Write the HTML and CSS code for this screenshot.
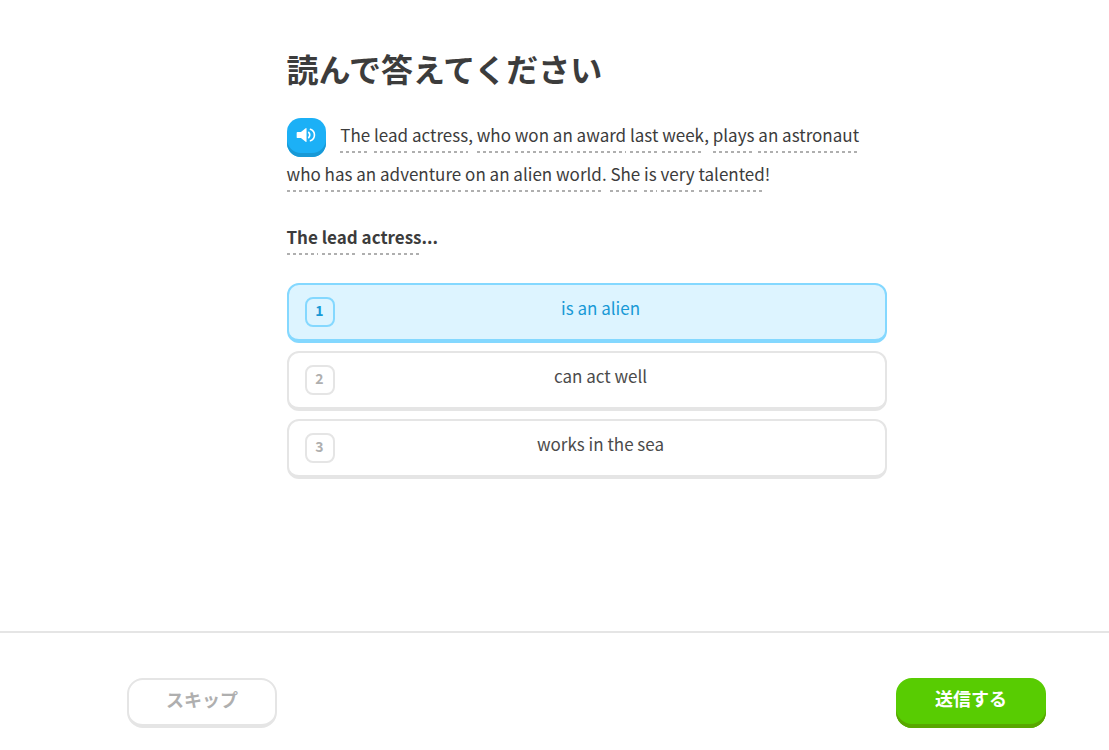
FILE: index.html
```html
<!DOCTYPE html>
<html lang="ja">
<head>
    <meta charset="UTF-8">
    <meta name="viewport" content="width=device-width, initial-scale=1.0">
    <title>読んで答えてください</title>
    <link rel="stylesheet" href="styles.css">
</head>
<body>
<form class="lesson">
    <main class="challenge">
        <h1 class="title">読んで答えてください</h1>

        <p class="passage" lang="en">
            <button type="button" class="speaker" aria-label="Play audio">
                <svg viewBox="0 0 22 18" width="20" height="16">
                    <path d="M1.5 5.5h3.8L10.6 1.3q1-.6 1 .5v14.4q0 1.1-1 .5L5.3 12.5H1.5q-1 0-1-1v-5q0-1 1-1z" fill="#fff"/>
                    <path d="M14 6q2.500 3 0 6M16 2.500q4.500 1.800 4.500 6.500t-4.500 6.500" fill="none" stroke="#fff" stroke-width="1.8" stroke-linecap="round"/>
                </svg>
            </button>
            <span class="word">The</span> <span class="word">lead</span> <span class="word">actress</span>, <span class="word">who</span> <span class="word">won</span> <span class="word">an</span> <span class="word">award</span> <span class="word">last</span> <span class="word">week</span>, <span class="word">plays</span> <span class="word">an</span> <span class="word">astronaut</span>
            <span class="word">who</span> <span class="word">has</span> <span class="word">an</span> <span class="word">adventure</span> <span class="word">on</span> <span class="word">an</span> <span class="word">alien</span> <span class="word">world</span>. <span class="word">She</span> <span class="word">is</span> <span class="word">very</span> <span class="word">talented</span>!
        </p>

        <p class="question" lang="en" id="question"><span class="word">The</span> <span class="word">lead</span> <span class="word">actress</span>...</p>

        <div class="choices" role="group" aria-labelledby="question" lang="en">
            <button type="button" class="choice selected" aria-pressed="true">
                <span class="number">1</span>
                <span class="text">is an alien</span>
            </button>
            <button type="button" class="choice" aria-pressed="false">
                <span class="number">2</span>
                <span class="text">can act well</span>
            </button>
            <button type="button" class="choice" aria-pressed="false">
                <span class="number">3</span>
                <span class="text">works in the sea</span>
            </button>
        </div>
    </main>

    <footer class="footer">
        <button type="button" class="btn skip">スキップ</button>
        <button type="submit" class="btn submit">送信する</button>
    </footer>
</form>

<script>
    const choices = document.querySelectorAll(".choice");

    choices.forEach((choice) => {
        choice.addEventListener("click", () => {
            choices.forEach((item) => {
                item.classList.toggle("selected", item === choice);
                item.setAttribute("aria-pressed", item === choice);
            });
        });
    });

    document.querySelector(".lesson").addEventListener("submit", (event) => {
        event.preventDefault();
    });
</script>
</body>
</html>
```
FILE: styles.css
```css
* {
    box-sizing: border-box;
}

body {
    margin: 0;
    background-color: #fff;
    color: #3c3c3c;
    font-family: "Noto Sans CJK JP", sans-serif;
    font-size: 17px;
}

button {
    font-family: inherit;
    cursor: pointer;
}

.lesson {
    display: flex;
    flex-direction: column;
    min-height: 100vh;
}

.challenge {
    flex: 1;
    display: flex;
    flex-direction: column;
    width: 100%;
    padding: 44px 63px 32px 127px;
}

.challenge > * {
    width: 100%;
    max-width: 600px;
    margin: 0 auto;
}

.title {
    font-size: 32px;
    line-height: 48px;
    font-weight: 700;
}

.challenge .passage {
    margin-top: 23px;
    line-height: 39px;
}

.speaker {
    display: inline-flex;
    align-items: center;
    justify-content: center;
    width: 39px;
    height: 39px;
    margin: -8px 11px -8px 0;
    padding: 0 0 4px;
    border: none;
    border-radius: 14px;
    background-color: #1cb0f6;
    box-shadow: inset 0 -4px #1899d6;
    vertical-align: middle;
}

.word {
    padding-bottom: 6px;
    background: repeating-linear-gradient(to right, #afafaf 0 3px, transparent 3px 6px) left bottom / 100% 2px no-repeat;
}

.challenge .question {
    margin-top: 24px;
    line-height: 39px;
    font-weight: 700;
}

.challenge .choices {
    display: flex;
    flex-direction: column;
    gap: 8px;
    margin-top: 27px;
}

.choice {
    display: flex;
    align-items: center;
    width: 100%;
    min-height: 60px;
    padding: 10px 16px;
    border: 2px solid #e5e5e5;
    border-bottom-width: 4px;
    border-radius: 12px;
    background-color: #fff;
    color: #4b4b4b;
    font-size: 17px;
}

.number {
    width: 30px;
    height: 30px;
    border: 2px solid #e5e5e5;
    border-radius: 8px;
    color: #afafaf;
    font-size: 14px;
    font-weight: 700;
    line-height: 22px;
}

.text {
    flex: 1;
    padding: 0 2px 8px 0;
    line-height: 24px;
}

.selected,
.selected .number {
    border-color: #84d8ff;
    color: #1899d6;
}

.selected {
    background-color: #ddf4ff;
}

.footer {
    display: flex;
    justify-content: space-between;
    padding: 45px 63px 22px 127px;
    border-top: 2px solid #e5e5e5;
}

.btn {
    width: 150px;
    height: 50px;
    padding: 0 16px 6px;
    border-radius: 16px;
    font-size: 18px;
    font-weight: 700;
}

.skip {
    border: 2px solid #e5e5e5;
    border-bottom-width: 4px;
    background-color: #fff;
    color: #afafaf;
}

.submit {
    padding-bottom: 10px;
    border: none;
    background-color: #58cc02;
    box-shadow: inset 0 -4px #58a700;
    color: #fff;
}
```
